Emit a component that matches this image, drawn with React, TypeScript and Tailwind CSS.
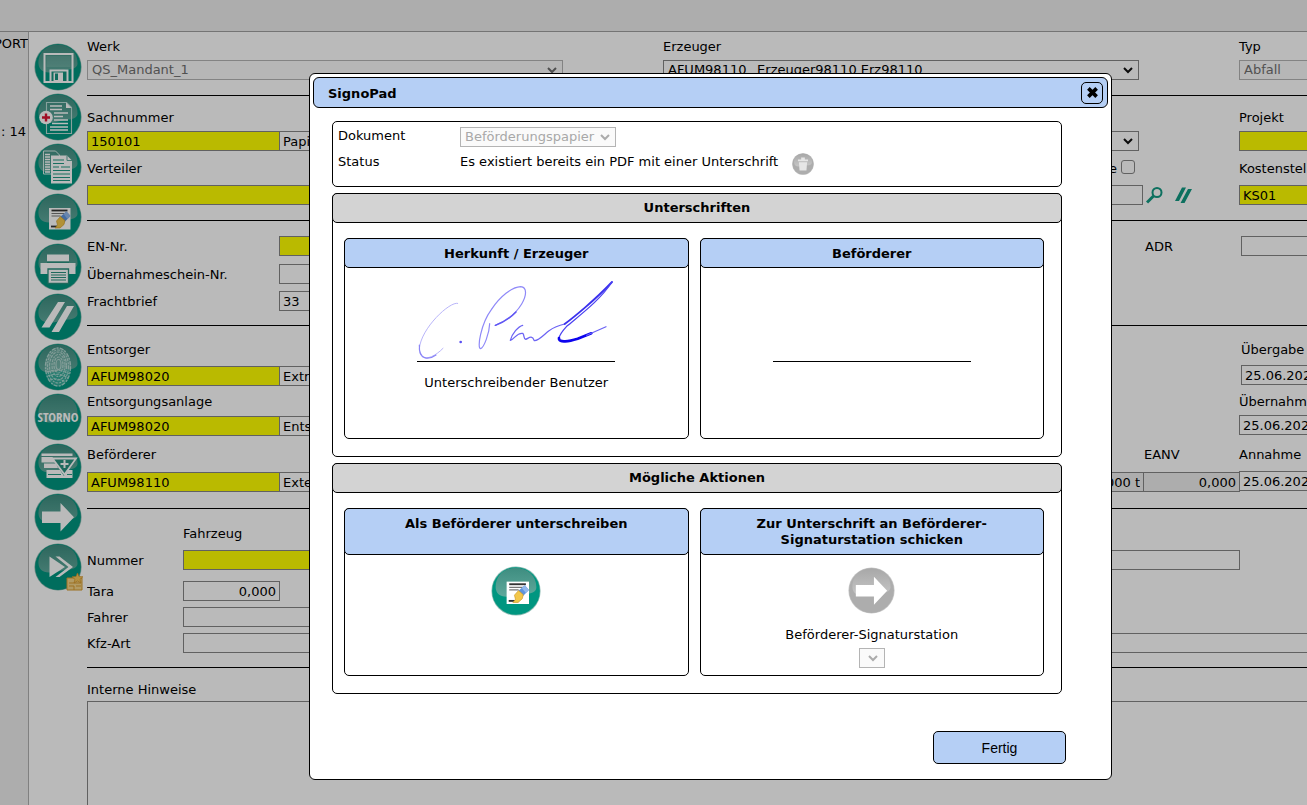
import { useState, type ReactNode } from 'react'
import { clsx } from 'clsx'

const COLS = 'grid grid-cols-[576px_576px_400px]'
const FIELD = 'block h-5 shrink-0 border border-[#858585] bg-white px-[3px] leading-4 outline-none'
const YELLOW = '!bg-[#ffff00]'

interface FieldProps {
  id: string
  label?: string
  value?: string
  className?: string
}

function Field({ id, label, value = '', className }: FieldProps) {
  return <input id={id} aria-label={label} defaultValue={value} className={clsx(FIELD, className)} />
}

interface SelectProps extends FieldProps {
  disabled?: boolean
  selectClassName?: string
}

function Select({ id, label, value = '', className, selectClassName, disabled }: SelectProps) {
  return (
    <div className={clsx('relative h-5', className)}>
      <select
        id={id}
        aria-label={label}
        disabled={disabled}
        className={clsx(
          'block h-5 w-full appearance-none border pl-1 pr-5 leading-4 outline-none',
          disabled ? 'border-[#b4b4b4] bg-[#fafafa]' : 'border-[#858585] bg-white',
          selectClassName
        )}
      >
        <option>{value}</option>
      </select>
      <svg
        viewBox="0 0 10 7"
        className={clsx('pointer-events-none absolute right-1.5 top-[7px] h-[7px] w-[10px]', disabled && 'opacity-60')}
        fill="none"
        stroke={selectClassName ? '#777' : '#111'}
        strokeWidth="2"
      >
        <path d="M1 1l4 4 4-4" />
      </svg>
    </div>
  )
}

function Label({ htmlFor, children, className }: { htmlFor?: string; children: ReactNode; className?: string }) {
  return (
    <label htmlFor={htmlFor} className={clsx('block h-4 whitespace-nowrap leading-[18px]', className)}>
      {children}
    </label>
  )
}

/* ---------- Round glossy icons ---------- */

function Orb({ children, gray, className = 'size-12' }: { children: ReactNode; gray?: boolean; className?: string }) {
  const id = gray ? 'gloss-gray' : 'gloss-teal'
  return (
    <svg viewBox="0 0 48 48" className={clsx('block', className)}>
      <defs>
        <linearGradient id={id} x1="0" y1="0" x2="0" y2="1">
          <stop offset="0" stopColor={gray ? '#a8a8a8' : '#3e8d80'} />
          <stop offset="1" stopColor={gray ? '#c6c6c6' : '#5fa99c'} />
        </linearGradient>
      </defs>
      <circle cx="24" cy="24" r="23.6" fill={gray ? '#c9c9c9' : '#8cbcb3'} />
      <circle cx="24" cy="24" r="22.9" fill={gray ? '#adadad' : '#009680'} />
      <path d="M4.5 21C4 10 12 1.800 24 1.800S44 10 43.500 21C43 25 38 26.500 34 26.500C26 27 22 30 15 29.500C8 29 5 26 4.500 21Z" fill={`url(#${id})`} />
      {children}
    </svg>
  )
}

function SaveIcon() {
  return (
    <Orb>
      <path d="M10.500 11h28v28h-28z" fill="none" stroke="#fff" strokeWidth="2" />
      <path d="M12.500 13h24v11h-24z" fill="#fff" opacity=".12" />
      <path d="M15.500 39V26.500h19V39" fill="#fff" />
      <path d="M17.500 38V28.500h15V38z" fill="#17937f" />
      <path d="M19.500 29.500h9.500V38h-9.500z" fill="#fff" />
      <path d="M21 30.500h3V37h-3z" fill="#17937f" />
    </Orb>
  )
}

function AddDocumentIcon() {
  return (
    <Orb>
      <path d="M12.500 9.500h20l5 5v26h-25z" fill="none" stroke="#b9ddd7" strokeWidth="1.100" />
      <path d="M32 9.500v5.500h5.500z" fill="#fff" />
      <path d="M16 13h12M16 16.500h12M20 20h14M20 23.500h9M20 27h14M18 30.500h16M16 34h18M16 37h18" stroke="#fff" strokeWidth="1.500" />
      <circle cx="12" cy="24.500" r="6.800" fill="#fff" />
      <path d="M12 20.500v8M8 24.500h8" stroke="#dc1534" strokeWidth="2.400" />
    </Orb>
  )
}

function CopyIcon() {
  return (
    <Orb>
      <path d="M9.500 8h12l4 4v19h-16z" fill="none" stroke="#d9eeea" />
      <path d="M11 11.500h5M11 14h5M11 16.500h5M11 19h5M11 21.500h5M11 24h5M11 26.500h5M11 29h5" stroke="#fff" strokeWidth="1.400" />
      <path d="M17 12.500h16l5 5v23H17z" fill="#fff" />
      <path d="M33 12.500v5h5" fill="none" stroke="#5fa99c" />
      <path d="M19 17h11M19 20.500h11M19 24h6M27 24h9M19 27.500h17M19 31h17M19 34.500h17M19 37.500h17" stroke="#239984" strokeWidth="1.100" />
    </Orb>
  )
}

function SignIcon({ className }: { className?: string }) {
  return (
    <Orb className={className}>
      <path d="M15 15h21.500v21.500H15z" fill="#fff" />
      <path d="M17.500 17.500h16" stroke="#333" strokeWidth="1.800" />
      <path d="M17.500 20.500h15M17.500 23h9" stroke="#777" strokeWidth="1.200" />
      <path d="M17 33.500h6" stroke="#333" strokeWidth="1.800" />
      <path d="M26 24l6.500-5.500 4 4.500-6 6z" fill="#5e94de" />
      <path d="M29.500 21l3-2.500 4 4.500-3 3z" fill="#91b8ee" />
      <path d="M22.500 28l4-4.500 4.500 4-1 4-4 3.500h-5l2.500-3z" fill="#f3c74a" stroke="#c99420" strokeWidth=".6" />
    </Orb>
  )
}

function PrintIcon() {
  return (
    <Orb>
      <path d="M13 11.500h22v7H13zM6.500 20h35v11h-35z" fill="#fff" />
      <path d="M13 18.500h22v1.500H13z" fill="#2a907f" />
      <path d="M14 26h20.500v14.500H14z" fill="#fff" stroke="#2a907f" strokeWidth="1.300" />
      <path d="M17 29.500h15M17 32h15M17 34.500h15M17 37h15" stroke="#2a907f" strokeWidth="1.200" />
    </Orb>
  )
}

function SlashesIcon() {
  return (
    <Orb>
      <path d="M7.500 34.500L24 9h7L15.500 34.500zM17.500 39L33 13h7L25 39z" fill="#fff" />
    </Orb>
  )
}

function FingerprintIcon() {
  return (
    <Orb>
      <ellipse cx="24" cy="24" rx="13" ry="19.500" fill="#cfe8e3" opacity=".25" />
      <g fill="none" stroke="#d3ebe6" opacity=".7">
        <ellipse cx="24" cy="24" rx="12.500" ry="19" strokeWidth="1.400" strokeDasharray="4 1 2 1.500" />
        <ellipse cx="24" cy="23.500" rx="10.500" ry="16.500" strokeWidth="1.100" strokeDasharray="3 1 2 1" />
        <ellipse cx="24" cy="23" rx="8.500" ry="14" strokeWidth="1.200" strokeDasharray="3 1" />
        <ellipse cx="24.500" cy="22.500" rx="6.500" ry="11" strokeWidth="1.100" strokeDasharray="2 1 3 1" />
        <ellipse cx="24.500" cy="22" rx="4.500" ry="8" strokeWidth="1.200" strokeDasharray="3 1" />
        <ellipse cx="24.500" cy="21.500" rx="2.500" ry="5" strokeWidth="1.100" />
        <path d="M13 29c7-3 15-2 23 2M14 33c6-3 14-2 20 2M16 37c5-2 10-1 15 2" strokeWidth="1.100" strokeDasharray="3 1" />
      </g>
    </Orb>
  )
}

function StornoIcon() {
  return (
    <Orb>
      <text x="24" y="29" textAnchor="middle" fill="#fff" className="font-['Open_Sans_Condensed','DejaVu_Sans_Condensed',sans-serif] text-[13px] font-bold">
        STORNO
      </text>
    </Orb>
  )
}

function StackIcon() {
  return (
    <Orb>
      <path d="M7.500 10.500h31v2.500h-31zM7.500 14h11l2.500 5.500H7.500zM10 20.500h12l2 4.500H10zM12.500 27h13.500l4 6 4-6h4.500v8h-26z" fill="#fff" />
      <path d="M14 31.500h13M33 31.500h5" stroke="#239984" strokeWidth="1.200" />
      <path d="M18.500 15.500h23.500l-11.500 16z" fill="#2a907f" stroke="#fff" strokeWidth="1.800" />
      <path d="M30.500 17v8M26.500 21h8" stroke="#fff" strokeWidth="2" />
    </Orb>
  )
}

function ArrowIcon({ gray, className }: { gray?: boolean; className?: string }) {
  return (
    <Orb gray={gray} className={className}>
      <path d="M8 18.500h18.500v-8.500L40 24.200 26.500 38.500V30H8z" fill="#fff" />
    </Orb>
  )
}

function ForwardIcon() {
  return (
    <Orb>
      <path d="M15.500 13.500L31 24 15.500 34z" fill="#fff" />
      <path d="M21.500 13.500h4L39 24 25.500 34h-4L34.500 24z" fill="#fff" />
    </Orb>
  )
}

const TOOLS = [
  { name: 'Speichern', Icon: SaveIcon },
  { name: 'Neuer Begleitschein', Icon: AddDocumentIcon },
  { name: 'Kopieren', Icon: CopyIcon },
  { name: 'Unterschreiben', Icon: SignIcon },
  { name: 'Drucken', Icon: PrintIcon },
  { name: 'Leeren', Icon: SlashesIcon },
  { name: 'Fingerabdruck', Icon: FingerprintIcon },
  { name: 'Storno', Icon: StornoIcon },
  { name: 'Hinzufügen', Icon: StackIcon },
  { name: 'Weiter', Icon: ArrowIcon },
  { name: 'Weiterleiten', Icon: ForwardIcon }
]

function Toolbar() {
  return (
    <nav className="flex w-[58px] shrink-0 flex-col gap-0.5 pl-[5px] pt-[11px]">
      {TOOLS.map(({ name, Icon }) => (
        <button key={name} type="button" title={name} className="relative size-12">
          <Icon />
          {name === 'Weiterleiten' && (
            <svg viewBox="0 0 18 18" className="absolute -right-0.5 bottom-0 size-[18px]">
              <path d="M1 5h15v12H1z" fill="#f4d58a" stroke="#d79b2e" />
              <path d="M3 10h12M3 13h5v4M10 13h5" stroke="#d79b2e" fill="none" />
              <path d="M11.500 0l1.500 3.500 4 .3-3 2.500 1 3.700-3.500-2-3.500 2 1-3.700-3-2.500 4-.3z" fill="#f6c65a" stroke="#d0922a" strokeWidth=".7" />
            </svg>
          )}
        </button>
      ))}
    </nav>
  )
}

/* ---------- Form behind the dialog ---------- */

function PartnerFields({ id, label, value, name }: { id: string; label: string; value: string; name: string }) {
  return (
    <div className="flex">
      <Field id={id} value={value} className={clsx('w-[193px]', YELLOW)} />
      <Field id={`${id}-name`} label={`${label} Name`} value={name} className="-ml-px w-[284px]" />
    </div>
  )
}

function TransportForm() {
  return (
    <form className="flex min-w-0 flex-1 flex-col overflow-hidden">
      <section className="border-b border-black pb-[15px] pt-1.5">
        <div className={COLS}>
          <div>
            <Label htmlFor="werk" className="mb-1.5">Werk</Label>
            <Select id="werk" value="QS_Mandant_1" disabled className="w-[476px] text-[#707070]" />
          </div>
          <div>
            <Label htmlFor="erzeuger" className="mb-1.5">Erzeuger</Label>
            <Select id="erzeuger" value="AFUM98110_ Erzeuger98110 Erz98110" className="w-[476px]" />
          </div>
          <div>
            <Label htmlFor="typ" className="mb-1.5">Typ</Label>
            <Select id="typ" value="Abfall" disabled className="w-[300px] text-[#707070]" />
          </div>
        </div>
      </section>

      <section className="border-b border-black pb-[15px] pt-[13px]">
        <div className={COLS}>
          <div>
            <Label htmlFor="sachnummer" className="mb-1.5">Sachnummer</Label>
            <PartnerFields id="sachnummer" label="Sachnummer" value="150101" name="Papier" />
          </div>
          <div className="pt-[22px]">
            <Select id="abfallart" label="Abfallart" className="w-[476px]" />
          </div>
          <div>
            <Label htmlFor="projekt" className="mb-1.5">Projekt</Label>
            <Field id="projekt" className={clsx('w-[300px]', YELLOW)} />
          </div>
        </div>
        <div className={clsx(COLS, 'mt-[9px]')}>
          <div>
            <Label htmlFor="verteiler" className="mb-[9px]">Verteiler</Label>
            <Field id="verteiler" className={clsx('w-[476px]', YELLOW)} />
          </div>
          <div>
            <div className="mb-[9px] flex h-4 w-[472px] justify-end gap-1">
              <Label htmlFor="vorlage">Vorlage</Label>
              <input id="vorlage" type="checkbox" className="size-[14px] appearance-none rounded-[3px] border border-[#858585] bg-white" />
            </div>
            <div className="flex">
              <Field id="suche" label="Suche" className="w-[480px]" />
              <button type="button" title="Suchen" className="ml-[3px]">
                <svg viewBox="0 0 17 18" className="h-[18px] w-[17px]" fill="none" stroke="#129a83">
                  <circle cx="11" cy="6.500" r="4.500" strokeWidth="2" />
                  <path d="M7.500 10L1 16.500" strokeWidth="3" />
                </svg>
              </button>
              <button type="button" title="Leeren" className="ml-3">
                <svg viewBox="0 0 17 18" className="h-[18px] w-[17px]" fill="#129a83">
                  <path d="M0 15L7 1.500h4L4 15zM5.500 17L13 3h4L9.500 17z" />
                </svg>
              </button>
            </div>
          </div>
          <div>
            <Label htmlFor="kostenstelle" className="mb-[9px]">Kostenstelle</Label>
            <Field id="kostenstelle" value="KS01" className={clsx('w-[300px]', YELLOW)} />
          </div>
        </div>
      </section>

      <section className="border-b border-black pb-[14px] pt-[15px]">
        <div className={clsx(COLS, 'items-center')}>
          <div className="flex items-center">
            <Label htmlFor="en-nr" className="w-48">EN-Nr.</Label>
            <Field id="en-nr" className={clsx('w-[284px]', YELLOW)} />
          </div>
          <Label htmlFor="adr" className="pl-[482px]">ADR</Label>
          <Field id="adr" className="ml-0.5 w-[300px]" />
        </div>
        <div className="mt-2 flex items-center">
          <Label htmlFor="schein-nr" className="w-48">Übernahmeschein-Nr.</Label>
          <Field id="schein-nr" className="w-[284px]" />
        </div>
        <div className="mt-[7px] flex items-center">
          <Label htmlFor="frachtbrief" className="w-48">Frachtbrief</Label>
          <Field id="frachtbrief" value="33" className="w-[284px]" />
        </div>
      </section>

      <section className="border-b border-black pb-4 pt-[15px]">
        <div className={COLS}>
          <div>
            <Label htmlFor="entsorger" className="mb-[9px]">Entsorger</Label>
            <PartnerFields id="entsorger" label="Entsorger" value="AFUM98020" name="Extra" />
          </div>
          <div />
          <div className="ml-0.5">
            <Label htmlFor="uebergabe" className="mb-2">Übergabe</Label>
            <Field id="uebergabe" value="25.06.2024" className="w-[120px]" />
          </div>
        </div>
        <div className={clsx(COLS, 'mt-[7px]')}>
          <div>
            <Label htmlFor="anlage" className="mb-[7px]">Entsorgungsanlage</Label>
            <PartnerFields id="anlage" label="Entsorgungsanlage" value="AFUM98020" name="Entsorgung" />
          </div>
          <div />
          <div>
            <Label htmlFor="uebernahme" className="mb-1.5">Übernahme</Label>
            <Field id="uebernahme" value="25.06.2024" className="w-[120px]" />
          </div>
        </div>
        <div className={clsx(COLS, 'mt-2.5')}>
          <div>
            <Label htmlFor="befoerderer" className="mb-2.5">Beförderer</Label>
            <PartnerFields id="befoerderer" label="Beförderer" value="AFUM98110" name="Extern" />
          </div>
          <div>
            <Label htmlFor="eanv" className="mb-2.5 pl-[481px]">EANV</Label>
            <div className="flex">
              <Field id="menge" label="Menge" value="0,000 t" className="w-[481px] !bg-[#eee] text-right" />
              <Field id="eanv" value="0,000" className="-ml-px w-[97px] !bg-[#eee] text-right" />
            </div>
          </div>
          <div>
            <Label htmlFor="annahme" className="mb-[9px]">Annahme</Label>
            <Field id="annahme" value="25.06.2024" className="relative w-[120px]" />
          </div>
        </div>
      </section>

      <section className="border-b border-black pb-[14px] pt-4">
        <p className="h-4 pl-24 leading-[18px]">Fahrzeug</p>
        <div className="mt-[9px] flex items-center">
          <Label htmlFor="nummer" className="w-24">Nummer</Label>
          <Field id="nummer" className={clsx('w-[476px]', YELLOW)} />
          <Field id="anhaenger" label="Anhänger" className="ml-1 w-[577px]" />
        </div>
        <div className="mt-[11px] flex items-center">
          <Label htmlFor="tara" className="w-24">Tara</Label>
          <Field id="tara" value="0,000" className="w-[97px] text-right" />
        </div>
        <div className="mt-1.5 flex items-center">
          <Label htmlFor="fahrer" className="w-24">Fahrer</Label>
          <Field id="fahrer" className="w-[476px]" />
        </div>
        <div className="mt-1.5 flex items-center">
          <Label htmlFor="kfz-art" className="w-24 shrink-0">Kfz-Art</Label>
          <Field id="kfz-art" className="flex-1 border-r-0" />
        </div>
      </section>

      <section className="flex flex-1 flex-col pt-[13px]">
        <Label htmlFor="hinweise" className="mb-1">Interne Hinweise</Label>
        <textarea id="hinweise" className="block w-full flex-1 resize-none border border-b-0 border-r-0 border-[#858585] bg-white outline-none" />
      </section>
    </form>
  )
}

/* ---------- Dialog ---------- */

function Panel({ title, children, className }: { title: string; children: ReactNode; className?: string }) {
  return (
    <section className={clsx('rounded-[5px] border border-black', className)}>
      <h2 className="-m-px rounded-[5px] border border-black bg-[#d3d3d3] py-1.5 text-center font-bold">{title}</h2>
      <div className="grid grid-cols-2 gap-[11px] pb-[17px] pl-[11px] pr-[17px] pt-4">{children}</div>
    </section>
  )
}

function Card({ title, children, className, titleClassName = 'h-[30px]' }: { title: string; children?: ReactNode; className?: string; titleClassName?: string }) {
  return (
    <article className={clsx('flex flex-col items-center rounded-[5px] border border-black', className)}>
      <h3 className={clsx('-mx-px -mt-px self-stretch rounded-[5px] border border-black bg-[#b5cff5] px-10 pt-[7px] text-center font-bold', titleClassName)}>
        {title}
      </h3>
      {children}
    </article>
  )
}

function Signature() {
  return (
    <svg viewBox="51 33 594 255" className="h-[85px] w-[198px]" fill="none" strokeLinecap="round" strokeLinejoin="round">
      <path d="M173 115C150 108 62 190 58 252C58 290 95 285 129 250" stroke="#b9b5fa" strokeWidth="3" />
      <path d="M58 240C56 290 90 283 108 270" stroke="#8a84f6" strokeWidth="3.500" />
      <circle cx="182" cy="231" r="4" fill="#5a50f2" />
      <path d="M269 176C268 205 252 248 242 251C230 250 243 176 274 134C300 94 336 66 362 65C382 67 380 92 365 117C350 142 325 165 286 181" stroke="#8f89f8" strokeWidth="3.600" />
      <path d="M286 181C310 172 332 158 348 141" stroke="#5f56f3" strokeWidth="4.500" />
      <path d="M368 181C355 184 336 206 331 226C345 222 350 202 368 205C374 210 370 222 377 223C386 220 395 208 403 227C415 228 430 211 446 198C460 188 476 181 494 177" stroke="#6c64f4" strokeWidth="3.800" />
      <path d="M494 177C520 158 585 105 636 51" stroke="#3a30ef" strokeWidth="5.500" />
      <path d="M636 51C600 106 540 150 500 184C487 198 478 211 477 220" stroke="#4b42f1" strokeWidth="3.800" />
      <path d="M477 219C475 236 510 228 533 221L574 205" stroke="#0d04ee" strokeWidth="8" />
      <path d="M560 211L618 185" stroke="#6a62f4" strokeWidth="3.500" />
    </svg>
  )
}

function SignoPadDialog({ onClose }: { onClose: () => void }) {
  return (
    <div role="dialog" aria-label="SignoPad" className="absolute left-[309px] top-[73px] w-[803px] rounded-[6px] border border-black bg-white p-[3px] leading-4">
      <header className="flex h-[31px] items-center justify-between rounded-[6px] border border-black bg-[#b5cff5] pl-[14px] pr-1">
        <h1 className="h-4 font-bold leading-[18px]">SignoPad</h1>
        <button type="button" title="Schließen" onClick={onClose} className="flex size-[22px] items-center justify-center rounded-[5px] border border-black">
          <svg viewBox="0 0 12 12" className="size-[11px]" stroke="#000" strokeWidth="4">
            <path d="M1.500 1.500l9 9M10.500 1.500l-9 9" />
          </svg>
        </button>
      </header>

      <div className="ml-[19px] mr-[46px] mt-[13px]">
        <div className="h-[66px] rounded-[5px] border border-black pl-[5px] pt-[5px]">
          <div className="flex">
            <Label htmlFor="dokument" className="w-[122px]">Dokument</Label>
            <Select id="dokument" value="Beförderungspapier" disabled className="w-[156px]" selectClassName="text-[#a8a8a8]" />
          </div>
          <div className="mt-1.5 flex leading-[18px]">
            <span className="w-[122px]">Status</span>
            <span>Es existiert bereits ein PDF mit einer Unterschrift</span>
            <button type="button" disabled title="Löschen" className="ml-[14px]">
              <Orb gray className="size-[22px]">
                <path d="M13 14h22v4H13zM20 10h8v4h-8zM15 20h18l-1.500 18h-15z" fill="#e6e6e6" />
              </Orb>
            </button>
          </div>
        </div>

        <Panel title="Unterschriften" className="mt-1.5">
          <Card title="Herkunft / Erzeuger" className="h-[201px]">
            <div className="mt-2 h-[86px] w-[198px] border-b border-black">
              <Signature />
            </div>
            <p className="mt-3 leading-[18px]">Unterschreibender Benutzer</p>
          </Card>
          <Card title="Beförderer" className="h-[201px]">
            <div className="mt-2 h-[86px] w-[198px] border-b border-black" />
          </Card>
        </Panel>

        <Panel title="Mögliche Aktionen" className="mt-1.5">
          <Card title="Als Beförderer unterschreiben" className="h-[168px]" titleClassName="h-[47px]">
            <button type="button" title="Als Beförderer unterschreiben" className="mt-[11px]">
              <SignIcon className="size-[50px]" />
            </button>
          </Card>
          <Card title="Zur Unterschrift an Beförderer-Signaturstation schicken" className="h-[168px]" titleClassName="h-[47px]">
            <button type="button" disabled title="An Signaturstation schicken" className="mt-3">
              <ArrowIcon gray className="size-[47px]" />
            </button>
            <Label htmlFor="station" className="mt-3">Beförderer-Signaturstation</Label>
            <Select id="station" disabled className="mt-1.5 w-[25px]" selectClassName="text-[#a8a8a8]" />
          </Card>
        </Panel>
      </div>

      <footer className="mb-3 mr-[42px] mt-[37px] flex justify-end">
        <button
          type="button"
          onClick={onClose}
          className="h-[33px] w-[133px] rounded-[5px] border border-black bg-[#b5cff5] font-['Liberation_Sans',Arial,sans-serif] text-[14px]"
        >
          Fertig
        </button>
      </footer>
    </div>
  )
}

export default function App() {
  const [open, setOpen] = useState(true)

  return (
    <div className="relative flex h-screen flex-col overflow-hidden bg-white font-['DejaVu_Sans',Verdana,sans-serif] text-[13px] leading-4 text-black">
      <header className="h-8 shrink-0 border-b border-[#a0a0a0] bg-[#eee]" />
      <div className="flex min-h-0 flex-1">
        <aside className="flex w-[29px] shrink-0 flex-col items-end overflow-hidden whitespace-nowrap border-r border-[#b0b0b0] bg-[#eee] pt-1">
          <span>PORT</span>
          <span className="mr-0.5 mt-[72px]">: 14</span>
        </aside>
        <Toolbar />
        <TransportForm />
      </div>

      {open && (
        <>
          <div className="absolute inset-0 bg-black/27" />
          <SignoPadDialog onClose={() => setOpen(false)} />
        </>
      )}
    </div>
  )
}
